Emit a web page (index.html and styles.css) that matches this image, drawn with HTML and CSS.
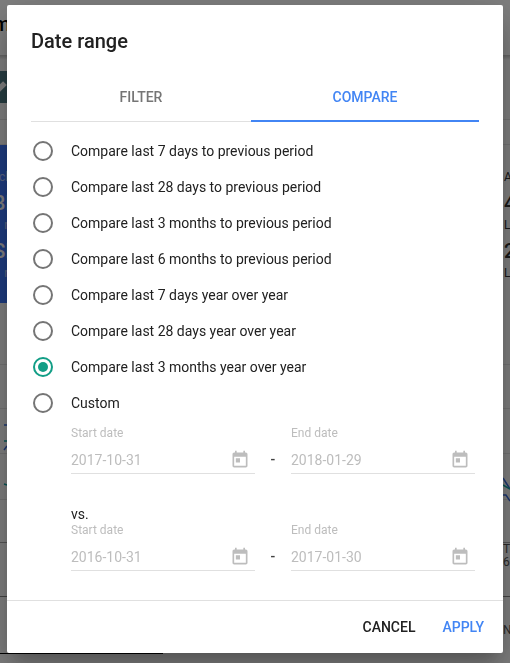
FILE: index.html
```html
<!DOCTYPE html>
<html lang="en">
<head>
  <meta charset="UTF-8" />
  <title>Date range</title>
  <link rel="stylesheet" href="styles.css">
</head>
<body>
  <!-- page behind the dialog, mostly hidden -->
  <div class="page">
    <header class="page-top"><span class="page-title">m</span></header>
    <div class="page-toolbar">
      <span class="chip">
        <svg viewBox="0 0 24 24" width="24" height="24"><path d="M3 17.25V21h3.75L17.81 9.94l-3.75-3.75L3 17.25z" fill="#fff"/></svg>
      </span>
    </div>
    <div class="page-strip"></div>
    <div class="page-cards">
      <div class="card-blue">
        <span class="card-small">cli</span>
        <span class="card-big">BI</span>
        <span class="card-small">n</span>
        <span class="card-big">SI</span>
        <span class="card-small">n</span>
      </div>
      <div class="card-side">
        <span class="card-small">A</span>
        <span class="card-big">4</span>
        <span class="card-small">L</span>
        <span class="card-big">2</span>
        <span class="card-small">L</span>
      </div>
    </div>
    <div class="page-row row-62"></div>
    <div class="page-row row-44"></div>
    <div class="page-row row-45">
      <svg class="chart-lines" viewBox="0 0 510 91" width="510" height="91" fill="none" stroke-width="1.5">
        <path d="M4 16h3M4 41l3-4" stroke="#3b6fe0"/>
        <path d="M4 32h3M4 75l3 1" stroke="#1aa"/>
        <path d="M503 69l7 11M503 86h3l4 6" stroke="#3b6fe0"/>
        <path d="M503 76l7 4" stroke="#1aa"/>
      </svg>
    </div>
    <div class="page-row row-46"></div>
    <div class="page-row row-43"></div>
    <div class="page-table">
      <span class="row-end">T</span>
      <span class="row-end">60</span>
    </div>
    <div class="page-foot"><span class="row-end">NT</span></div>
    <div class="page-bar"></div>
  </div>
  <div class="scrim"></div>

  <section class="dialog">
    <h2 class="dialog-title">Date range</h2>

    <div class="tabs">
      <div class="tab">FILTER</div>
      <div class="tab tab-active">COMPARE</div>
    </div>

    <ul class="options">
      <li class="option"><span class="radio"></span>Compare last 7 days to previous period</li>
      <li class="option"><span class="radio"></span>Compare last 28 days to previous period</li>
      <li class="option"><span class="radio"></span>Compare last 3 months to previous period</li>
      <li class="option"><span class="radio"></span>Compare last 6 months to previous period</li>
      <li class="option"><span class="radio"></span>Compare last 7 days year over year</li>
      <li class="option"><span class="radio"></span>Compare last 28 days year over year</li>
      <li class="option"><span class="radio radio-on"></span>Compare last 3 months year over year</li>
      <li class="option"><span class="radio"></span>Custom</li>
    </ul>

    <div class="custom">
      <div class="date-row">
        <div class="field">
          <div class="field-label">Start date</div>
          <div class="field-input">2017-10-31
            <svg class="cal" viewBox="0 0 24 24" width="20" height="20"><path d="M19 3h-1V1h-2v2H8V1H6v2H5c-1.11 0-1.99.9-1.99 2L3 19c0 1.1.89 2 2 2h14c1.1 0 2-.9 2-2V5c0-1.1-.9-2-2-2zm0 16H5V8h14v11zM7 10h5v5H7z"/></svg>
          </div>
        </div>
        <span class="dash">-</span>
        <div class="field">
          <div class="field-label">End date</div>
          <div class="field-input">2018-01-29
            <svg class="cal" viewBox="0 0 24 24" width="20" height="20"><path d="M19 3h-1V1h-2v2H8V1H6v2H5c-1.11 0-1.99.9-1.99 2L3 19c0 1.1.89 2 2 2h14c1.1 0 2-.9 2-2V5c0-1.1-.9-2-2-2zm0 16H5V8h14v11zM7 10h5v5H7z"/></svg>
          </div>
        </div>
      </div>

      <div class="vs">vs.</div>

      <div class="date-row">
        <div class="field">
          <div class="field-label">Start date</div>
          <div class="field-input">2016-10-31
            <svg class="cal" viewBox="0 0 24 24" width="20" height="20"><path d="M19 3h-1V1h-2v2H8V1H6v2H5c-1.11 0-1.99.9-1.99 2L3 19c0 1.1.89 2 2 2h14c1.1 0 2-.9 2-2V5c0-1.1-.9-2-2-2zm0 16H5V8h14v11zM7 10h5v5H7z"/></svg>
          </div>
        </div>
        <span class="dash">-</span>
        <div class="field">
          <div class="field-label">End date</div>
          <div class="field-input">2017-01-30
            <svg class="cal" viewBox="0 0 24 24" width="20" height="20"><path d="M19 3h-1V1h-2v2H8V1H6v2H5c-1.11 0-1.99.9-1.99 2L3 19c0 1.1.89 2 2 2h14c1.1 0 2-.9 2-2V5c0-1.1-.9-2-2-2zm0 16H5V8h14v11zM7 10h5v5H7z"/></svg>
          </div>
        </div>
      </div>
    </div>

    <footer class="actions">
      <button class="action">CANCEL</button>
      <button class="action action-primary">APPLY</button>
    </footer>
  </section>
</body>
</html>
```

FILE: styles.css
```css
:root {
  --color-primary: #4285f4;
  --color-radio: #757575;
  --color-radio-on: #129e86;
  --color-text: #212121;
  --color-muted: #bdbdbd;
  --color-line: #e0e0e0;
}

html, body {
  margin: 0;
  height: 100%;
  overflow: hidden;
}

body {
  font-family: Roboto, Arial, sans-serif;
  background: #fff;
  color: var(--color-text);
}

/* page behind the scrim */
.page {
  width: 510px;
  height: 663px;
  overflow: hidden;
  color: #000;
}

.page-top {
  height: 55px;
  overflow: hidden;
}

.page-title {
  display: block;
  margin-left: -7px;
  padding-top: 12px;
  font-size: 20px;
  line-height: 24px;
  font-weight: 500;
}

.page-toolbar {
  height: 65px;
  box-sizing: border-box;
  padding-top: 16px;
  border-bottom: 1px solid #e6e6e6;
  background: linear-gradient(#c4c4c4, #fff 5px);
}

.chip {
  display: block;
  width: 12px;
  height: 32px;
  overflow: hidden;
  background: #4f7b84;
}

.chip svg {
  margin: 4px 0 0 -11px;
}

.page-strip {
  height: 25px;
  box-sizing: border-box;
  border-bottom: 1px solid #e6e6e6;
}

.page-cards {
  display: flex;
  justify-content: space-between;
  height: 158px;
}

.card-blue {
  width: 60px;
  background: #3b77ff;
  color: #fff;
  padding-top: 24px;
  box-sizing: border-box;
  display: flex;
  flex-direction: column;
  align-items: flex-end;
  margin-left: -49px;
}

.card-blue span {
  width: 60px;
  text-align: right;
}

.card-blue .card-small {
  opacity: 0.6;
}

.card-side {
  width: 6px;
  padding-top: 24px;
  display: flex;
  flex-direction: column;
  color: #333;
  overflow: hidden;
}

.card-small {
  font-size: 12px;
  line-height: 16px;
  white-space: nowrap;
}

.card-big {
  font-size: 20px;
  line-height: 28px;
  font-weight: 500;
  margin-top: 4px;
}

.page-row {
  box-sizing: border-box;
  border-bottom: 1px solid #e6e6e6;
}

.row-62 { height: 62px; }
.row-44 { height: 44px; }
.row-45 { height: 45px; }
.row-46 { height: 46px; }
.row-43 { height: 43px; border-bottom-color: #aaa; }

.chart-lines {
  display: block;
  overflow: visible;
}

.page-table {
  height: 54px;
  box-sizing: border-box;
  border-bottom: 1px solid #888;
  display: flex;
  flex-direction: column;
  align-items: flex-end;
}

.row-end {
  font-size: 12px;
  line-height: 13px;
  color: #555;
  width: 7px;
  overflow: hidden;
}

.page-foot {
  height: 56px;
  box-sizing: border-box;
  padding-top: 27px;
  display: flex;
  justify-content: flex-end;
}

.page-bar {
  width: 163px;
  height: 1px;
  background: #000;
}

.scrim {
  position: fixed;
  inset: 0;
  background: rgb(0 0 0 / 0.5);
}

/* dialog */
.dialog {
  position: fixed;
  left: 7px;
  top: 5px;
  width: 496px;
  height: 648px;
  box-sizing: border-box;
  padding-top: 24px;
  background: #fff;
  border-radius: 2px;
  display: flex;
  flex-direction: column;
  box-shadow: 0 11px 15px -7px rgb(0 0 0 / 0.2), 0 24px 38px 3px rgb(0 0 0 / 0.14), 0 9px 46px 8px rgb(0 0 0 / 0.12);
}

.dialog-title {
  margin: 0 24px;
  font-size: 20px;
  line-height: 24px;
  font-weight: 500;
}

.tabs {
  display: flex;
  margin: 21px 24px 0;
  height: 48px;
  box-sizing: border-box;
  border-bottom: 1px solid var(--color-line);
}

.tab {
  width: 220px;
  height: 48px;
  box-sizing: border-box;
  font-size: 14px;
  font-weight: 500;
  line-height: 46px;
  text-align: center;
  color: #757575;
}

.tab-active {
  width: 228px;
  color: var(--color-primary);
  border-bottom: 2px solid var(--color-primary);
}

.options {
  list-style: none;
  margin: 11px 0 0;
  padding: 0 0 0 26px;
}

.option {
  display: flex;
  align-items: center;
  gap: 18px;
  height: 36px;
  font-size: 14px;
}

.radio {
  width: 20px;
  height: 20px;
  box-sizing: border-box;
  border: 2px solid var(--color-radio);
  border-radius: 50%;
  display: flex;
  align-items: center;
  justify-content: center;
}

.radio-on {
  border-color: var(--color-radio-on);
}

.radio-on::after {
  content: "";
  width: 10px;
  height: 10px;
  border-radius: 50%;
  background: var(--color-radio-on);
}

.custom {
  margin: 4px 28px 0 64px;
}

.date-row {
  display: grid;
  grid-template-columns: 184px 36px 184px;
}

.field-label {
  font-size: 12px;
  line-height: 16px;
  color: var(--color-muted);
}

.field-input {
  display: flex;
  align-items: center;
  justify-content: space-between;
  height: 31px;
  margin-top: 2px;
  padding: 3px 5px 0 0;
  box-sizing: border-box;
  border-bottom: 1px solid var(--color-line);
  font-size: 14px;
  color: var(--color-muted);
}

.cal {
  fill: #bdbdbd;
}

.dash {
  align-self: center;
  padding-top: 18px;
  text-align: center;
  font-size: 14px;
  font-weight: 500;
  color: #424242;
}

.vs {
  margin-top: 32px;
  font-size: 14px;
  line-height: 16px;
}

.actions {
  margin-top: auto;
  height: 53px;
  box-sizing: border-box;
  border-top: 1px solid var(--color-line);
  display: flex;
  justify-content: flex-end;
  align-items: center;
  gap: 27px;
  padding-right: 19px;
}

.action {
  padding: 0;
  border: none;
  background: none;
  font-family: inherit;
  font-size: 14px;
  font-weight: 500;
  color: var(--color-text);
  cursor: pointer;
}

.action-primary {
  color: var(--color-primary);
}
```
